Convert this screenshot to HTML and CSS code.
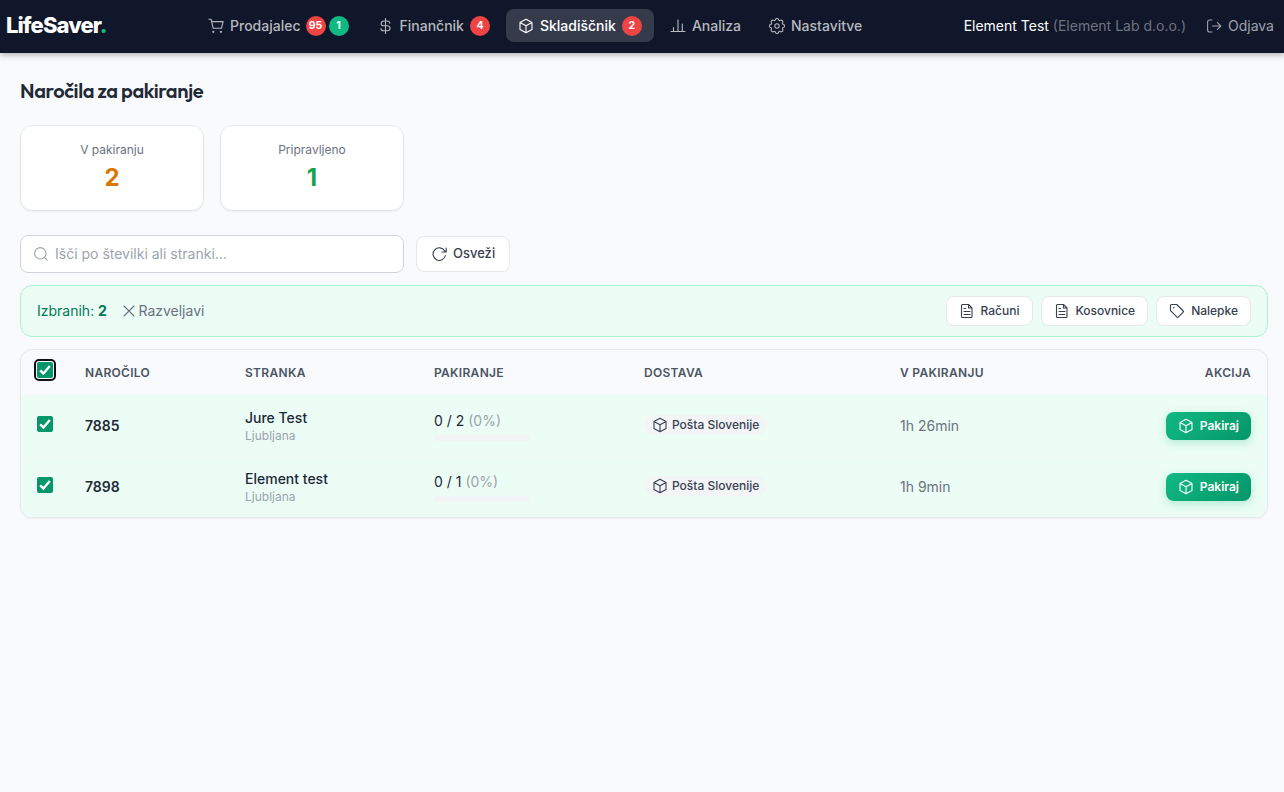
FILE: index.html
```
<!DOCTYPE html>
<html lang="sl">

<head>
  <meta charset="UTF-8">
  <title>LifeSaver - Skladiščnik</title>
  <link rel="stylesheet" href="styles.css">
</head>

<body>
  <svg class="sprite">
    <symbol id="box" viewBox="0 0 16 16">
      <path d="M8 1.2l6 3.3v7L8 14.8l-6-3.3v-7zM2 4.5l6 3.3 6-3.3M8 7.8v7" />
    </symbol>
    <symbol id="file" viewBox="0 0 16 16">
      <path d="M3.5 1.5h6L13 5v8.500q0 1-1 1H3.500q-1 0-1-1V2.500q0-1 1-1zM9.500 1.500V5H13M5 5.500h1.500M5 8.500h6M5 11.500h6" />
    </symbol>
    <symbol id="check" viewBox="0 0 16 16">
      <path d="M3.2 8.3l3.2 3.2L12.8 4" />
    </symbol>
  </svg>

  <header class="header">
    <a href="#" class="logo">LifeSaver<span>.</span></a>
    <nav class="nav">
      <a href="#" class="nav_item">
        <svg class="icon" viewBox="0 0 16 16"><path d="M.8 1.2h2.3l2 9h8.400l1.600-6.600H3.700" /><circle class="dot" cx="5.3" cy="13.8" r="1.1" /><circle class="dot" cx="12.9" cy="13.8" r="1.1" /></svg>
        <span>Prodajalec</span>
        <span class="badges"><b class="badge">95</b><b class="badge green">1</b></span>
      </a>
      <a href="#" class="nav_item">
        <svg class="icon" viewBox="0 0 16 16"><path d="M7.500 .5v15M11.800 5.200c0-1.400-1-2.200-2.500-2.200H6C4.300 3 3.200 3.900 3.200 5.400s1 2.400 2.800 2.400h3.200c1.800 0 2.800.9 2.800 2.500s-1.100 2.500-2.800 2.500H5.600c-1.600 0-2.600-.9-2.600-2.300" /></svg>
        <span>Finančnik</span>
        <b class="badge">4</b>
      </a>
      <a href="#" class="nav_item active">
        <svg class="icon"><use href="#box" /></svg>
        <span>Skladiščnik</span>
        <b class="badge">2</b>
      </a>
      <a href="#" class="nav_item">
        <svg class="icon" viewBox="0 0 16 16"><path d="M1 13.500h14M3.500 13.500V9.500M8 13.500V2M12.300 13.500V6" /></svg>
        <span>Analiza</span>
      </a>
      <a href="#" class="nav_item">
        <svg class="icon" viewBox="-0.5 -0.5 17 17"><path d="M9.796 1.343c-.527-1.790-3.065-1.790-3.592 0l-.094.319a.873.873 0 0 1-1.255.520l-.292-.160c-1.640-.892-3.433.902-2.540 2.541l.159.292a.873.873 0 0 1-.520 1.255l-.319.094c-1.790.527-1.790 3.065 0 3.592l.319.094a.873.873 0 0 1 .520 1.255l-.160.292c-.892 1.640.901 3.434 2.541 2.540l.292-.159a.873.873 0 0 1 1.255.520l.094.319c.527 1.790 3.065 1.790 3.592 0l.094-.319a.873.873 0 0 1 1.255-.520l.292.160c1.640.893 3.434-.902 2.540-2.541l-.159-.292a.873.873 0 0 1 .520-1.255l.319-.094c1.790-.527 1.790-3.065 0-3.592l-.319-.094a.873.873 0 0 1-.520-1.255l.160-.292c.893-1.640-.902-3.433-2.541-2.540l-.292.159a.873.873 0 0 1-1.255-.520z" /><circle cx="8" cy="8" r="2.300" /></svg>
        <span>Nastavitve</span>
      </a>
    </nav>
    <div class="user">
      <span>Element Test <i>(Element Lab d.o.o.)</i></span>
      <a href="#" class="logout">
        <svg class="icon" viewBox="0 0 16 16"><path d="M6 2H3.600Q1.600 2 1.600 4v8q0 2 2 2H6M6.500 8h8.200M11.500 4.700L14.800 8l-3.300 3.300" /></svg>
        <span>Odjava</span>
      </a>
    </div>
  </header>

  <main class="main">
    <h1>Naročila za pakiranje</h1>

    <div class="stats">
      <div class="stat">
        <p>V pakiranju</p>
        <strong class="orange">2</strong>
      </div>
      <div class="stat">
        <p>Pripravljeno</p>
        <strong>1</strong>
      </div>
    </div>

    <div class="toolbar">
      <label class="search">
        <svg class="icon" viewBox="0 0 16 16"><circle cx="7.3" cy="7.3" r="5.7" /><path d="M11.5 11.5l2.700 2.700" /></svg>
        <input type="text" placeholder="Išči po številki ali stranki...">
      </label>
      <button class="btn btn_refresh">
        <svg class="icon" viewBox="0 0 16 16"><path d="M14.500 9.500A6.300 6.300 0 1 1 13.700 4.800L15.200 6M15.200 2V6h-4.200" /></svg>
        <span>Osveži</span>
      </button>
    </div>

    <div class="selection">
      <span class="count">Izbranih: <b>2</b></span>
      <a href="#" class="clear">
        <svg class="icon" viewBox="0 0 12 12"><path d="M1 1l10 10M11 1L1 11" /></svg>
        <span>Razveljavi</span>
      </a>
      <div class="actions">
        <button class="btn"><svg class="icon"><use href="#file" /></svg><span>Računi</span></button>
        <button class="btn"><svg class="icon"><use href="#file" /></svg><span>Kosovnice</span></button>
        <button class="btn"><svg class="icon" viewBox="0 0 16 16"><path d="M2.500 1.500h5.200l6.500 6.500q.6.600 0 1.200l-5 5q-.6.600-1.200 0L1.500 7.700V2.500q0-1 1-1z" /><circle class="dot" cx="4.7" cy="4.7" r=".8" /></svg><span>Nalepke</span></button>
      </div>
    </div>

    <div class="card">
      <table class="orders">
        <thead>
          <tr>
            <th class="col_check"><span class="check focus"><svg><use href="#check" /></svg></span></th>
            <th class="col_order">Naročilo</th>
            <th class="col_client">Stranka</th>
            <th class="col_pack">Pakiranje</th>
            <th class="col_delivery">Dostava</th>
            <th>V pakiranju</th>
            <th class="right">Akcija</th>
          </tr>
        </thead>
        <tbody>
          <tr>
            <td><span class="check"><svg><use href="#check" /></svg></span></td>
            <td class="number">7885</td>
            <td><p class="client">Jure Test</p><p class="city">Ljubljana</p></td>
            <td><p class="progress_text">0 / 2 <span>(0%)</span></p><div class="progress"></div></td>
            <td><span class="tag"><svg class="icon"><use href="#box" /></svg><span>Pošta Slovenije</span></span></td>
            <td class="time">1h 26min</td>
            <td class="right"><button class="btn btn_pack"><svg class="icon"><use href="#box" /></svg><span>Pakiraj</span></button></td>
          </tr>
          <tr>
            <td><span class="check"><svg><use href="#check" /></svg></span></td>
            <td class="number">7898</td>
            <td><p class="client">Element test</p><p class="city">Ljubljana</p></td>
            <td><p class="progress_text">0 / 1 <span>(0%)</span></p><div class="progress"></div></td>
            <td><span class="tag"><svg class="icon"><use href="#box" /></svg><span>Pošta Slovenije</span></span></td>
            <td class="time">1h 9min</td>
            <td class="right"><button class="btn btn_pack"><svg class="icon"><use href="#box" /></svg><span>Pakiraj</span></button></td>
          </tr>
        </tbody>
      </table>
    </div>
  </main>
</body>

</html>
```

FILE: styles.css
```
* {
  margin: 0;
  padding: 0;
  box-sizing: border-box;
}

body {
  min-height: 100vh;
  background: #f9fafc;
  font-family: Inter, "Liberation Sans", sans-serif;
  font-size: 14px;
  color: #1f2937;
}

a {
  text-decoration: none;
}

.sprite {
  display: none;
}

.icon {
  flex: none;
  width: 16px;
  height: 16px;
  fill: none;
  stroke: currentColor;
  stroke-width: 1.1;
  stroke-linecap: round;
  stroke-linejoin: round;
}

.icon .dot {
  fill: currentColor;
  stroke: none;
}

/* header */
.header {
  display: flex;
  align-items: center;
  height: 53px;
  padding: 0 10px 2px 6px;
  background: #10172a;
  box-shadow: 0 2px 6px rgba(0, 0, 0, 0.3);
}

.logo {
  width: 190px;
  padding-bottom: 1px;
  color: #fff;
  font-size: 22px;
  font-weight: 800;
  letter-spacing: -0.9px;
}

.logo span {
  color: #10b981;
}

.nav {
  display: flex;
  gap: 4px;
}

.nav_item {
  display: flex;
  align-items: center;
  gap: 6px;
  height: 33px;
  padding: 0 12px;
  border-radius: 8px;
  color: #b7b9bf;
  font-weight: 500;
}

.nav_item.active {
  background: #353b4b;
  color: #fff;
}

.badges {
  display: flex;
  gap: 3px;
  margin: 0 1px 0 -1px;
}

.badge {
  width: 20px;
  height: 20px;
  border-radius: 50%;
  background: #ef4444;
  color: #fff;
  font-size: 10.5px;
  font-weight: 700;
  line-height: 19px;
  text-align: center;
}

.badge.green {
  background: #10b981;
}

.user {
  display: flex;
  align-items: center;
  gap: 20px;
  margin-left: auto;
  color: #fff;
}

.user i {
  color: #70747f;
  font-style: normal;
}

.logout {
  display: flex;
  align-items: center;
  gap: 6px;
  color: #9fa2aa;
}

/* content */
.main {
  padding: 25px 16px 0 20px;
}

h1 {
  font-family: Outfit, Lato, sans-serif;
  font-size: 20px;
  font-weight: 600;
  line-height: 26px;
  letter-spacing: -0.4px;
}

.stats {
  display: flex;
  gap: 16px;
  margin-top: 21px;
}

.stat {
  width: 184px;
  height: 86px;
  padding-top: 16px;
  background: #fff;
  border: 1px solid #e5e7eb;
  border-radius: 12px;
  box-shadow: 0 1px 2px rgba(0, 0, 0, 0.05);
  text-align: center;
}

.stat p {
  color: #6b7280;
  font-size: 12px;
  line-height: 16px;
}

.stat strong {
  display: block;
  margin-top: 4px;
  color: #16a34a;
  font-size: 24px;
  line-height: 32px;
}

.stat .orange {
  color: #d97706;
}

.toolbar {
  display: flex;
  align-items: center;
  gap: 12px;
  margin-top: 24px;
}

.search {
  display: flex;
  align-items: center;
  gap: 6px;
  width: 384px;
  height: 38px;
  padding: 0 12px;
  background: #fff;
  border: 1px solid #d1d5db;
  border-radius: 8px;
  color: #9ca3af;
}

.search input {
  flex: 1;
  padding-bottom: 2px;
  border: none;
  outline: none;
  font: inherit;
}

.search input::placeholder {
  color: #9ca3af;
}

.btn {
  display: inline-flex;
  align-items: center;
  justify-content: center;
  gap: 6px;
  height: 30px;
  padding: 0 12px;
  background: #fff;
  border: 1px solid #e5e7eb;
  border-radius: 8px;
  color: #374151;
  font: 500 12px Inter, sans-serif;
}

.actions .btn span {
  padding-bottom: 2px;
}

.btn_refresh {
  height: 36px;
  padding: 0 14px;
  font-size: 13px;
}

.btn_refresh span {
  padding-bottom: 3px;
}

.selection {
  display: flex;
  align-items: center;
  height: 52px;
  margin-top: 12px;
  padding: 0 16px;
  background: #ebfdf5;
  border: 1px solid #a7f3d0;
  border-radius: 12px;
}

.count,
.clear span {
  padding-bottom: 2px;
}

.count {
  color: #047857;
}

.clear {
  display: flex;
  align-items: center;
  gap: 3.5px;
  margin-left: 16px;
  color: #6b7280;
}

.clear .icon {
  width: 12px;
  height: 12px;
}

.actions {
  display: flex;
  gap: 8px;
  margin-left: auto;
}

/* orders table */
.card {
  margin-top: 12px;
  border: 1px solid #e5e7eb;
  border-radius: 12px;
  box-shadow: 0 1px 2px rgba(0, 0, 0, 0.06);
  overflow: hidden;
}

.orders {
  width: 100%;
  border-collapse: collapse;
  table-layout: fixed;
}

.col_check {
  width: 48px;
}

.col_order {
  width: 160px;
}

.col_client {
  width: 189px;
}

.col_pack {
  width: 210px;
}

.col_delivery {
  width: 256px;
}

th,
td {
  padding: 0 16px;
  text-align: left;
}

th {
  height: 45px;
  color: #4b5563;
  font-size: 12px;
  font-weight: 600;
  letter-spacing: 0.3px;
  text-transform: uppercase;
}

td {
  height: 61px;
  background: #ebfdf5;
  border-top: 1px solid #f0faf7;
}

.orders .right {
  text-align: right;
}

.check {
  display: block;
  width: 16px;
  height: 16px;
  margin-bottom: 5px;
  border-radius: 2px;
  background: #059669;
}

td .check {
  margin-bottom: 3px;
}

.check svg {
  display: block;
  width: 16px;
  height: 16px;
  fill: none;
  stroke: #fff;
  stroke-width: 2.4;
}

.check.focus {
  outline: 2px solid #101010;
  outline-offset: 1px;
  box-shadow: 0 0 0 1px #fff;
}

.number {
  font-weight: 600;
}

.client {
  font-weight: 500;
  line-height: 20px;
}

.city {
  color: #9ca3af;
  font-size: 12px;
  line-height: 16px;
}

.progress_text {
  line-height: 20px;
}

.progress_text span {
  color: #9ca3af;
}

.progress {
  width: 96px;
  height: 6px;
  margin-top: 4px;
  border-radius: 3px;
  background: #f3f4f6;
}

.tag {
  display: inline-flex;
  align-items: center;
  gap: 4px;
  height: 20px;
  padding: 0 8px;
  border-radius: 10px;
  background: #f3f4f6;
  color: #374151;
  font-size: 12px;
  font-weight: 500;
}

.tag span {
  padding-bottom: 1px;
}

.time {
  color: #6b7280;
}

.btn_pack {
  height: 28px;
  border: none;
  background: linear-gradient(135deg, #10b981, #059669);
  box-shadow: 0 3px 8px rgba(16, 185, 129, 0.25);
  color: #fff;
  font-weight: 600;
}
```
